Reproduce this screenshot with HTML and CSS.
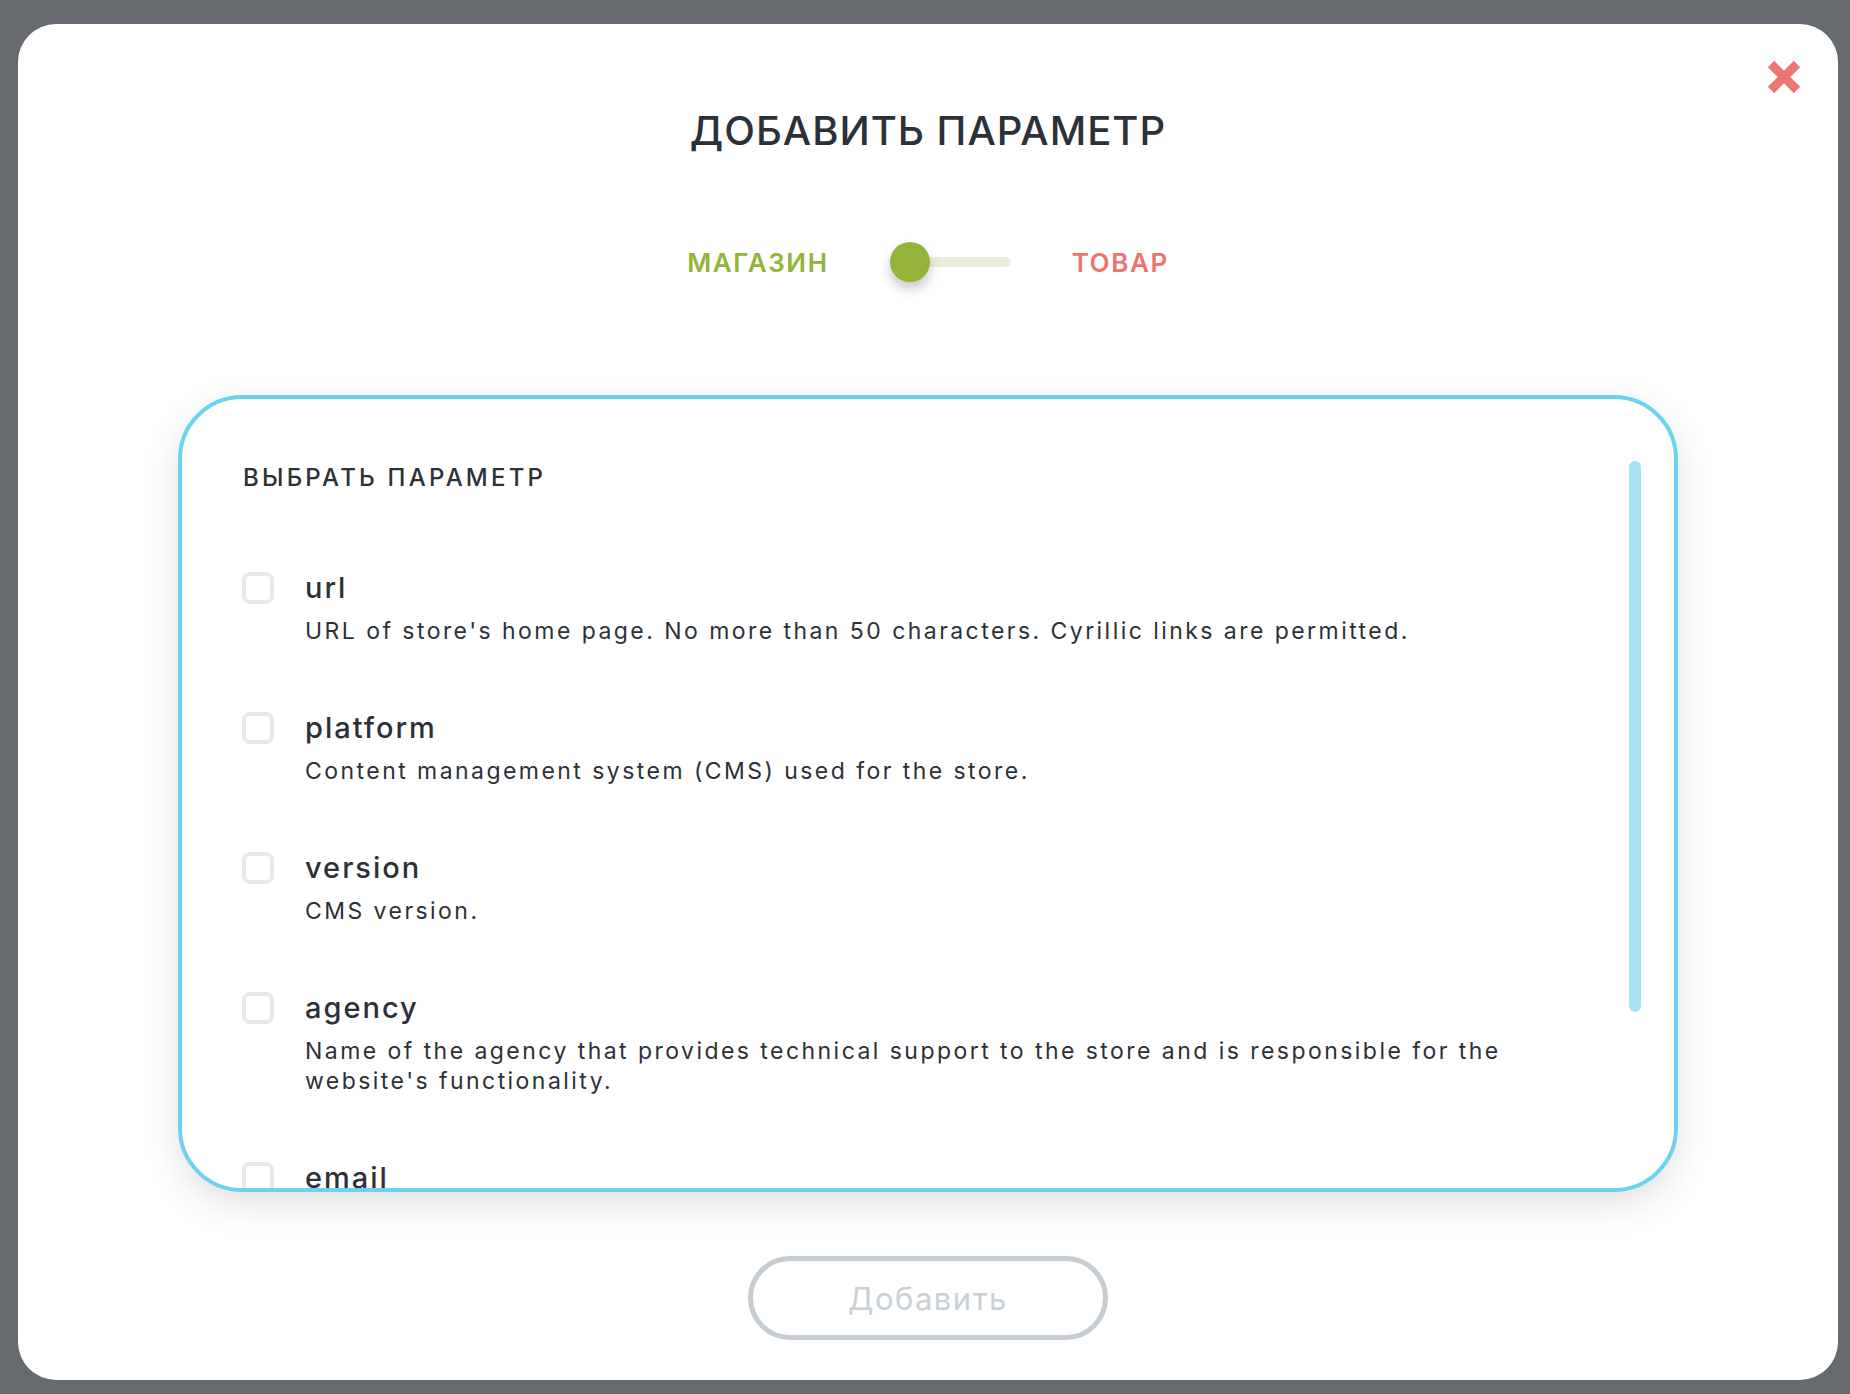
FILE: index.html
```html
<!DOCTYPE html>
<html lang="ru">
<head>
<meta charset="utf-8">
<title>Добавить параметр</title>
<link rel="stylesheet" href="styles.css">
</head>
<body>
<div class="modal">
  <button class="close" aria-label="Закрыть">
    <svg width="36" height="36" viewBox="0 0 36 36"><path d="M5 5 L31 31 M31 5 L5 31" stroke="#ee7672" stroke-width="9" fill="none"/></svg>
  </button>
  <h1 class="title">ДОБАВИТЬ ПАРАМЕТР</h1>
  <div class="toggle-row">
    <span class="opt opt-shop">МАГАЗИН</span>
    <div class="switch"><span class="track"></span><span class="knob"></span></div>
    <span class="opt opt-item">ТОВАР</span>
  </div>
  <div class="panel">
    <div class="scrollbar"></div>
    <h2 class="panel-title">ВЫБРАТЬ ПАРАМЕТР</h2>
    <ul class="list">
      <li class="item"><span class="check"></span><div class="text"><div class="name">url</div><div class="desc">URL of store's home page. No more than 50 characters. Cyrillic links are permitted.</div></div></li>
      <li class="item"><span class="check"></span><div class="text"><div class="name">platform</div><div class="desc">Content management system (CMS) used for the store.</div></div></li>
      <li class="item"><span class="check"></span><div class="text"><div class="name">version</div><div class="desc">CMS version.</div></div></li>
      <li class="item"><span class="check"></span><div class="text"><div class="name">agency</div><div class="desc">Name of the agency that provides technical support to the store and is responsible for the website's functionality.</div></div></li>
      <li class="item"><span class="check"></span><div class="text"><div class="name">email</div><div class="desc">Contact address of the developers of the CMS or the agency providing technical support.</div></div></li>
    </ul>
  </div>
  <button class="add">Добавить</button>
</div>
</body>
</html>
```

FILE: styles.css
```css
* { box-sizing: border-box; }
html, body { margin: 0; padding: 0; }
body {
  background: #676b6f;
  height: 1394px;
  overflow: hidden;
  font-family: Inter, "Noto Sans", "Liberation Sans", sans-serif;
  color: #2b3137;
}
.modal {
  position: relative;
  margin: 24px 12px 0 18px;
  height: 1356px;
  background: #fff;
  border-radius: 38px;
  display: flex;
  flex-direction: column;
  align-items: center;
  padding-top: 83px;
}
.close {
  position: absolute;
  top: 35px;
  right: 36px;
  width: 36px;
  height: 36px;
  padding: 0;
  border: 0;
  background: none;
  cursor: pointer;
}
.close svg { display: block; }
.title {
  margin: 0;
  font-size: 40px;
  line-height: 48px;
  font-weight: 500;
  letter-spacing: 1px;
  color: #2b3137;
}
.toggle-row {
  margin-top: 87px;
  height: 40px;
  display: flex;
  align-items: center;
  gap: 61px;
}
.opt {
  font-size: 26px;
  font-weight: 600;
  letter-spacing: 1.6px;
}
.opt-shop { color: #94b33a; }
.opt-item { color: #ee7470; }
.switch {
  position: relative;
  width: 121px;
  height: 40px;
  display: flex;
  align-items: center;
}
.track {
  display: block;
  margin-left: 12px;
  width: 109px;
  height: 10px;
  border-radius: 5px;
  background: #e9efda;
}
.knob {
  position: absolute;
  left: 0;
  top: 0;
  width: 40px;
  height: 40px;
  border-radius: 50%;
  background: #94b33a;
  box-shadow: 0 7px 12px rgba(0,0,0,0.22);
}
.panel {
  position: relative;
  margin-top: 113px;
  width: 1500px;
  height: 797px;
  border: 4px solid #6dd1ef;
  border-radius: 64px;
  background: #fff;
  box-shadow: 0 12px 34px rgba(60,70,80,0.16);
  overflow: hidden;
  padding: 65px 61px 0;
}
.scrollbar {
  position: absolute;
  top: 62px;
  right: 33px;
  width: 12px;
  height: 551px;
  border-radius: 6px;
  background: #a9e2f5;
}
.panel-title {
  margin: 0;
  font-size: 24px;
  line-height: 28px;
  font-weight: 500;
  letter-spacing: 3.2px;
  color: #2b3137;
}
.list {
  list-style: none;
  margin: 76px 0 0;
  padding: 0;
}
.item {
  display: flex;
  gap: 31px;
  margin-bottom: 62px;
}
.check {
  flex: none;
  width: 32px;
  height: 32px;
  margin-top: 4px;
  margin-left: -1px;
  border: 4px solid #e8e8e8;
  border-radius: 8px;
}
.text { max-width: 1240px; margin-left: 0; }
.name {
  font-size: 29px;
  line-height: 40px;
  font-weight: 500;
  letter-spacing: 2px;
  color: #2b3137;
}
.desc {
  margin-top: 8px;
  font-size: 23px;
  line-height: 30px;
  letter-spacing: 2.45px;
  color: #2b3137;
}
.add {
  margin-top: 64px;
  width: 360px;
  height: 84px;
  border: 5px solid #c5ccd2;
  border-radius: 42px;
  background: #fff;
  font-family: inherit;
  font-size: 31px;
  letter-spacing: 1.5px;
  color: #c8d0d6;
}
```
